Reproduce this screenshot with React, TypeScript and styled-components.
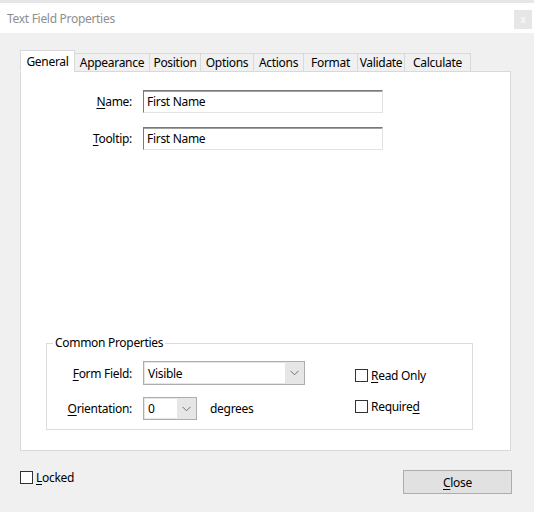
import * as React from 'react'
import styled, { createGlobalStyle } from 'styled-components'

const GlobalStyle = createGlobalStyle`
  html, body {
    margin: 0;
    padding: 0;
    background: #f0f0f0;
  }
  body {
    font-family: 'Noto Sans', 'Open Sans', sans-serif;
    font-size: 12px;
    letter-spacing: -0.3px;
    color: #000;
  }
`

const Window = styled.div`
  width: 534px;
  height: 512px;
  display: flex;
  flex-direction: column;
  background: #f0f0f0;
  overflow: hidden;
`

const TopStrip = styled.div`
  height: 3px;
  background: #e6e6e6;
`

const TitleBar = styled.div`
  height: 30px;
  background: #fff;
  display: flex;
  align-items: center;
  justify-content: space-between;
  padding: 0 2px 0 7px;
`

const Title = styled.span`
  color: #8e8e8e;
  font-size: 12px;
`

const CloseX = styled.div`
  width: 18px;
  height: 19px;
  background: #e6e6e6;
  color: #fff;
  font-size: 10px;
  display: flex;
  align-items: center;
  justify-content: center;
  margin-top: 2px;
`

const Body = styled.div`
  padding: 17px 23px 0 20px;
  display: flex;
  flex-direction: column;
`

const TabRow = styled.div`
  display: flex;
  align-items: flex-end;
  height: 22px;
  position: relative;
  z-index: 1;
  margin-bottom: -1px;
`

const Tab = styled.div<{ active?: boolean; width: number }>`
  width: ${({ width }) => width}px;
  height: ${({ active }) => (active ? '22px' : '19px')};
  box-sizing: border-box;
  border: 1px solid #d9d9d9;
  border-bottom: ${({ active }) => (active ? '1px solid #fff' : '1px solid #d9d9d9')};
  margin-left: -1px;
  background: ${({ active }) => (active ? '#fff' : '#f0f0f0')};
  display: flex;
  justify-content: center;
  align-items: ${({ active }) => (active ? 'flex-start' : 'center')};
  padding-top: ${({ active }) => (active ? '2px' : '0')};
  white-space: nowrap;
  &:first-child {
    margin-left: 0;
  }
`

const Panel = styled.div`
  height: 380px;
  box-sizing: border-box;
  border: 1px solid #d9d9d9;
  background: #fff;
  display: flex;
  flex-direction: column;
  padding-top: 18px;
`

const FieldRow = styled.div<{ last?: boolean }>`
  display: flex;
  align-items: center;
  margin-bottom: ${({ last }) => (last ? '0' : '14px')};
`

const Label = styled.label<{ width: number }>`
  width: ${({ width }) => width}px;
  text-align: right;
  margin-right: 11px;
  flex-shrink: 0;
  white-space: nowrap;
`

const Key = styled.span`
  text-decoration: underline;
  text-underline-offset: 2px;
`

const TextInput = styled.div`
  width: 240px;
  height: 23px;
  box-sizing: border-box;
  border: 1px solid;
  border-color: #7a7a7a #e3e3e3 #e3e3e3 #7a7a7a;
  box-shadow: inset 0 1px 0 #a0a0a0;
  padding: 0 3px;
  display: flex;
  align-items: center;
`

const GroupBox = styled.fieldset`
  margin: auto 0 20px 25px;
  width: 427px;
  height: 94px;
  box-sizing: border-box;
  border: 1px solid #dcdcdc;
  padding: 11px 0 0 0;
  display: flex;
`

const Legend = styled.legend`
  margin-left: 6px;
  padding: 0 2px;
  line-height: 14px;
`

const GroupLeft = styled.div`
  display: flex;
  flex-direction: column;
  gap: 12px;
`

const GroupRight = styled.div`
  display: flex;
  flex-direction: column;
  gap: 14px;
  margin-left: 50px;
  padding-top: 6px;
`

const Select = styled.div<{ width: number; height: number }>`
  width: ${({ width }) => width}px;
  height: ${({ height }) => height}px;
  box-sizing: border-box;
  border: 1px solid #adadad;
  background: #e6e6e6;
  display: flex;
  flex-shrink: 0;
`

const SelectValue = styled.div`
  flex: 1;
  background: #fff;
  margin: 1px 0 1px 1px;
  padding-left: 3px;
  display: flex;
  align-items: center;
`

const SelectArrow = styled.div`
  width: 19px;
  display: flex;
  align-items: center;
  justify-content: center;
`

const Unit = styled.span`
  margin-left: 13px;
`

const CheckLine = styled.label`
  display: flex;
  align-items: center;
  white-space: nowrap;
`

const Box = styled.span`
  width: 13px;
  height: 13px;
  box-sizing: border-box;
  border: 1px solid #333;
  background: #fff;
  margin-right: 3px;
  flex-shrink: 0;
`

const Footer = styled.div`
  display: flex;
  justify-content: space-between;
  align-items: flex-start;
  margin-top: 18px;
`

const Button = styled.div`
  width: 109px;
  height: 24px;
  box-sizing: border-box;
  border: 1px solid #adadad;
  background: #e1e1e1;
  display: flex;
  align-items: center;
  justify-content: center;
  margin-right: -1px;
  margin-top: 1px;
`

const Chevron: React.FC = () => (
  <svg width="9" height="6" viewBox="0 0 9 6">
    <path d="M0.5 0.8 L4.5 4.8 L8.5 0.8" fill="none" stroke="#707070" strokeWidth="1" />
  </svg>
)

const tabs: { name: string; width: number }[] = [
  { name: 'General', width: 55 },
  { name: 'Appearance', width: 76 },
  { name: 'Position', width: 52 },
  { name: 'Options', width: 54 },
  { name: 'Actions', width: 51 },
  { name: 'Format', width: 55 },
  { name: 'Validate', width: 48 },
  { name: 'Calculate', width: 67 },
]

const App: React.FC = () => {
  return (
    <Window>
      <GlobalStyle />
      <TopStrip />
      <TitleBar>
        <Title>Text Field Properties</Title>
        <CloseX>x</CloseX>
      </TitleBar>
      <Body>
        <TabRow>
          {tabs.map((t, i) => (
            <Tab key={t.name} active={i === 0} width={t.width}>
              {t.name}
            </Tab>
          ))}
        </TabRow>
        <Panel>
          <FieldRow>
            <Label width={111}>
              <Key>N</Key>ame:
            </Label>
            <TextInput>First Name</TextInput>
          </FieldRow>
          <FieldRow>
            <Label width={111}>
              <Key>T</Key>ooltip:
            </Label>
            <TextInput>First Name</TextInput>
          </FieldRow>

          <GroupBox>
            <Legend>Common Properties</Legend>
            <GroupLeft>
              <FieldRow last>
                <Label width={85}>
                  <Key>F</Key>orm Field:
                </Label>
                <Select width={162} height={24}>
                  <SelectValue>Visible</SelectValue>
                  <SelectArrow>
                    <Chevron />
                  </SelectArrow>
                </Select>
              </FieldRow>
              <FieldRow last>
                <Label width={85}>
                  <Key>O</Key>rientation:
                </Label>
                <Select width={54} height={23}>
                  <SelectValue>0</SelectValue>
                  <SelectArrow>
                    <Chevron />
                  </SelectArrow>
                </Select>
                <Unit>degrees</Unit>
              </FieldRow>
            </GroupLeft>
            <GroupRight>
              <CheckLine>
                <Box />
                <span>
                  <Key>R</Key>ead Only
                </span>
              </CheckLine>
              <CheckLine>
                <Box />
                <span>
                  Require<Key>d</Key>
                </span>
              </CheckLine>
            </GroupRight>
          </GroupBox>
        </Panel>
        <Footer>
          <CheckLine>
            <Box />
            <span>
              <Key>L</Key>ocked
            </span>
          </CheckLine>
          <Button>
            <span>
              <Key>C</Key>lose
            </span>
          </Button>
        </Footer>
      </Body>
    </Window>
  )
}

export default App
